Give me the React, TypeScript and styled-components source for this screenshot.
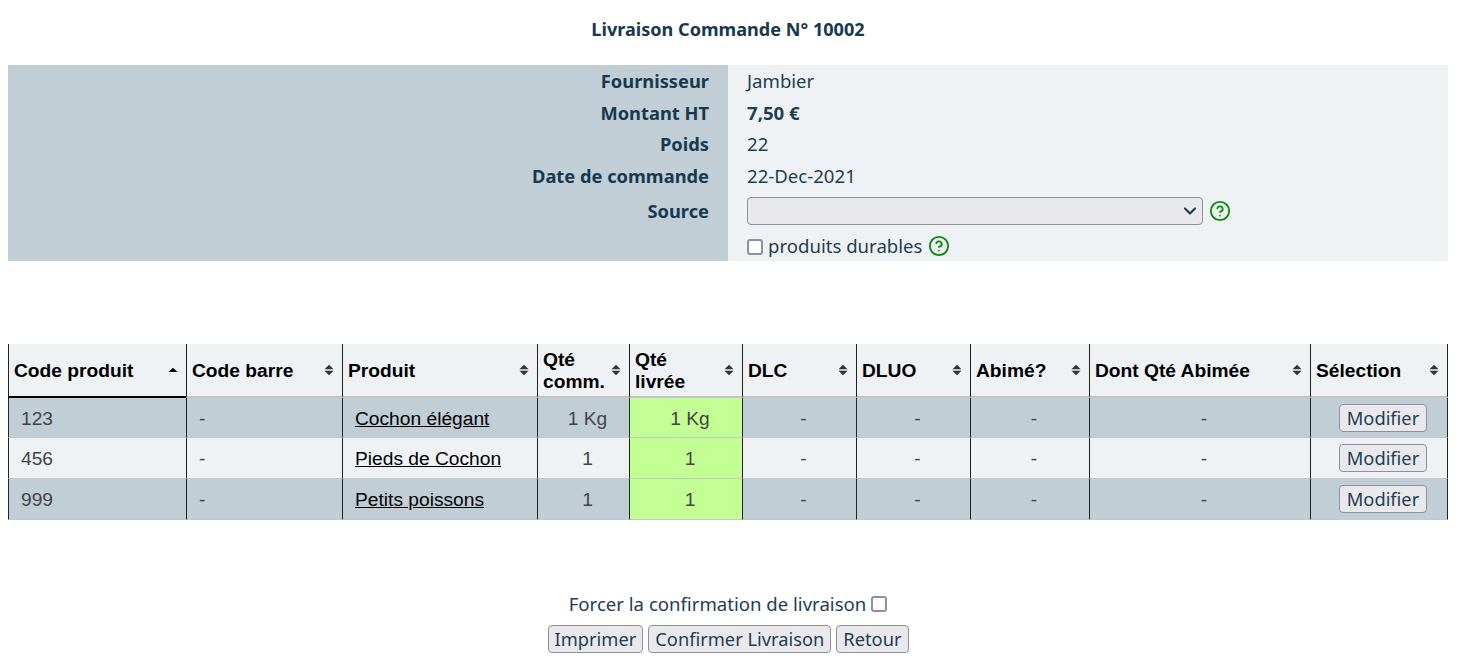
import React from 'react';
import styled, { createGlobalStyle } from 'styled-components';
import { ChevronDown, CircleHelp } from 'lucide-react';

const GlobalStyle = createGlobalStyle`
    body {
        margin: 0;
        padding: 0 10px 0 8px;
        background: #fff;
        color: #1f3d52;
        font-family: "Noto Sans", "Open Sans", sans-serif;
        font-size: 18.6px;
    }
`;

const Title = styled.h1`
    margin: 0;
    height: 65px;
    padding-top: 17px;
    box-sizing: border-box;
    font-size: 18.1px;
    line-height: 24px;
    font-weight: 700;
    text-align: center;
    color: #17394f;
`;

const InfoPanel = styled.section`
    display: grid;
    grid-template-columns: 720px 1fr;
    grid-auto-rows: auto;
    height: 196px;
    background: #eff2f5;
`;

const InfoLabel = styled.div<{ $h: number }>`
    height: ${(p) => p.$h}px;
    box-sizing: border-box;
    display: flex;
    align-items: center;
    justify-content: flex-end;
    padding-right: 19px;
    background: #c1ced6;
    font-size: 18.3px;
    font-weight: 700;
    color: #17394f;
`;

const SourceLabel = styled(InfoLabel)`
    padding-bottom: 2px;
`;

const InfoValue = styled.div<{ $h: number; $bold?: boolean }>`
    height: ${(p) => p.$h}px;
    display: flex;
    align-items: center;
    padding-left: 19px;
    font-weight: ${(p) => (p.$bold ? 700 : 400)};
`;

const SelectWrap = styled.div`
    position: relative;
    display: flex;
    width: 456px;
    height: 28px;
`;

const SourceSelect = styled.select`
    appearance: none;
    width: 100%;
    background: #e9e9ed;
    border: 1px solid #8f8f9d;
    border-radius: 4px;
    color: #1f3d52;
    font-size: 16px;
`;

const SelectArrow = styled(ChevronDown)`
    position: absolute;
    top: 4px;
    right: 3px;
    width: 20px;
    height: 20px;
    stroke-width: 2.6;
    color: #1f3d52;
    pointer-events: none;
`;

const HelpIcon = styled(CircleHelp)`
    width: 22px;
    height: 22px;
    margin-left: 6px;
    color: #0a8a0a;
    flex: none;
`;

const CheckBox = styled.input.attrs({ type: 'checkbox' })`
    appearance: none;
    width: 16px;
    height: 16px;
    margin: 2px 0 0;
    background: #fff;
    border: 2px solid #8f8f9d;
    border-radius: 3px;
    box-sizing: border-box;
    flex: none;
`;

const CheckLabel = styled.span`
    margin-left: 5px;
`;

const TableWrap = styled.div`
    margin-top: 83px;
`;

const ProductTable = styled.table`
    width: 1440px;
    border-collapse: separate;
    border-spacing: 0;
    table-layout: fixed;
    font-family: "Liberation Sans", Arial, sans-serif;
    font-size: 19.2px;
`;

const Col = styled.col<{ $w: number }>`
    width: ${(p) => p.$w}px;
`;

const HeadCell = styled.th<{ $sorted?: boolean }>`
    height: 54px;
    padding: 0 0 0 5px;
    box-sizing: border-box;
    background: #eff2f5;
    color: #000;
    text-align: left;
    font-weight: 700;
    line-height: 22px;
    border-left: 1px solid #222;
    border-bottom: ${(p) => (p.$sorted ? '2px solid #000' : '2px solid #c4c4c4')};
    &:last-child {
        border-right: 1px solid #222;
    }
`;

const HeadInner = styled.div`
    display: flex;
    align-items: center;
    justify-content: space-between;
    padding-right: 8px;
`;

const HeadLabel = styled.span`
    padding-top: 2px;
`;

const Row = styled.tr<{ $odd: boolean }>`
    background: ${(p) => (p.$odd ? '#c1ced6' : '#eff2f5')};
    &:not(:first-child) td {
        height: 41px;
    }
`;

const Cell = styled.td<{ $align?: string; $pad?: number; $ok?: boolean }>`
    height: 40px;
    padding: 2px 0 0 ${(p) => p.$pad ?? 8}px;
    box-sizing: border-box;
    color: #444;
    text-align: ${(p) => p.$align ?? 'center'};
    border-left: 1px solid #222;
    border-bottom: 1px solid #c8c8c8;
    background: ${(p) => (p.$ok ? '#c4ff96' : 'transparent')};
    &:last-child {
        border-right: 1px solid #222;
        padding-top: 0;
    }
`;

const ProductLink = styled.a`
    color: #000;
    text-decoration: underline;
`;

const Button = styled.button`
    height: 28px;
    padding: 0 7px;
    background: #e9e9ed;
    border: 1px solid #8f8f9d;
    border-radius: 4px;
    color: #1f3d52;
    font-family: "Noto Sans", "Open Sans", sans-serif;
    font-size: 18.3px;
    line-height: 24px;
`;

const FooterButton = styled(Button)`
    padding: 0 6px;
`;

const Footer = styled.div`
    margin-top: 71px;
    display: flex;
    flex-direction: column;
    align-items: center;
    gap: 10px;
`;

const ForceRow = styled.div`
    display: flex;
    align-items: center;
    gap: 5px;
    height: 24px;
`;

const ButtonRow = styled.div`
    display: flex;
    gap: 5px;
`;

const SortIcon: React.FC<{ dir?: 'both' | 'up' }> = ({ dir = 'both' }) => (
    <svg width="10" height="12" viewBox="0 0 10 12" fill={dir === 'up' ? '#000' : '#333'} style={{ flex: 'none' }}>
        {dir === 'both' ? (
            <>
                <path d="M5 .8 9.5 5.2H.5Z" />
                <path d="M5 11.2 .5 6.8h9Z" />
            </>
        ) : (
            <path d="M5 3.8 9.5 8H.5Z" />
        )}
    </svg>
);

const columns: { label: React.ReactNode; width: number }[] = [
    { label: 'Code produit', width: 178 },
    { label: 'Code barre', width: 156 },
    { label: 'Produit', width: 195 },
    { label: <>Qté<br />comm.</>, width: 92 },
    { label: <>Qté<br />livrée</>, width: 113 },
    { label: 'DLC', width: 114 },
    { label: 'DLUO', width: 114 },
    { label: 'Abimé?', width: 119 },
    { label: 'Dont Qté Abimée', width: 221 },
    { label: 'Sélection', width: 138 },
];

const rows = [
    { code: '123', name: 'Cochon élégant', qty: '1 Kg' },
    { code: '456', name: 'Pieds de Cochon', qty: '1' },
    { code: '999', name: 'Petits poissons', qty: '1' },
];

const App: React.FC = () => (
    <>
        <GlobalStyle />
        <Title>Livraison Commande N° 10002</Title>
        <InfoPanel>
            <InfoLabel $h={31}>Fournisseur</InfoLabel>
            <InfoValue $h={31}>Jambier</InfoValue>
            <InfoLabel $h={32}>Montant HT</InfoLabel>
            <InfoValue $h={32} $bold>7,50 €</InfoValue>
            <InfoLabel $h={31}>Poids</InfoLabel>
            <InfoValue $h={31}>22</InfoValue>
            <InfoLabel $h={33}>Date de commande</InfoLabel>
            <InfoValue $h={33}>22-Dec-2021</InfoValue>
            <SourceLabel $h={38}>Source</SourceLabel>
            <InfoValue $h={38}>
                <SelectWrap>
                    <SourceSelect>
                        <option></option>
                    </SourceSelect>
                    <SelectArrow />
                </SelectWrap>
                <HelpIcon />
            </InfoValue>
            <InfoLabel $h={31} />
            <InfoValue $h={31}>
                <CheckBox />
                <CheckLabel>produits durables</CheckLabel>
                <HelpIcon />
            </InfoValue>
        </InfoPanel>
        <TableWrap>
            <ProductTable>
                <colgroup>
                    {columns.map((c, i) => (
                        <Col key={i} $w={c.width} />
                    ))}
                </colgroup>
                <thead>
                    <tr>
                        {columns.map((c, i) => (
                            <HeadCell key={i} $sorted={i === 0}>
                                <HeadInner>
                                    <HeadLabel>{c.label}</HeadLabel>
                                    <SortIcon dir={i === 0 ? 'up' : 'both'} />
                                </HeadInner>
                            </HeadCell>
                        ))}
                    </tr>
                </thead>
                <tbody>
                    {rows.map((r, i) => (
                        <Row key={r.code} $odd={i % 2 === 0}>
                            <Cell $align="left" $pad={12}>{r.code}</Cell>
                            <Cell $align="left" $pad={12}>-</Cell>
                            <Cell $align="left" $pad={12}>
                                <ProductLink href="#">{r.name}</ProductLink>
                            </Cell>
                            <Cell>{r.qty}</Cell>
                            <Cell $ok>{r.qty}</Cell>
                            <Cell>-</Cell>
                            <Cell>-</Cell>
                            <Cell>-</Cell>
                            <Cell>-</Cell>
                            <Cell>
                                <Button>Modifier</Button>
                            </Cell>
                        </Row>
                    ))}
                </tbody>
            </ProductTable>
        </TableWrap>
        <Footer>
            <ForceRow>
                Forcer la confirmation de livraison
                <CheckBox />
            </ForceRow>
            <ButtonRow>
                <FooterButton>Imprimer</FooterButton>
                <FooterButton>Confirmer Livraison</FooterButton>
                <FooterButton>Retour</FooterButton>
            </ButtonRow>
        </Footer>
    </>
);

export default App;
